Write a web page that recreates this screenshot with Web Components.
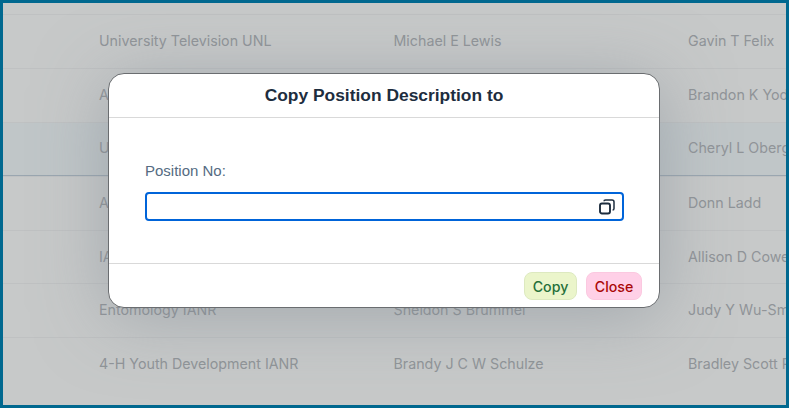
<!DOCTYPE html>
<html>
<head>
<meta charset="utf-8">
<style>
  html, body { margin: 0; height: 100%; }
  body { overflow: hidden; }
</style>
</head>
<body>
<app-frame>
  <data-row first><span>University Television UNL</span><span>Michael E Lewis</span><span>Gavin T Felix</span></data-row>
  <data-row><span>A</span><span></span><span>Brandon K Yoder</span></data-row>
  <data-row selected><span>U</span><span></span><span>Cheryl L Oberg</span></data-row>
  <data-row><span>A</span><span></span><span>Donn Ladd</span></data-row>
  <data-row><span>IA</span><span></span><span>Allison D Cowell</span></data-row>
  <data-row><span>Entomology IANR</span><span>Sheldon S Brummel</span><span>Judy Y Wu-Smart</span></data-row>
  <data-row><span>4-H Youth Development IANR</span><span>Brandy J C W Schulze</span><span>Bradley Scott Ross</span></data-row>
  <copy-dialog slot="dialog" heading="Copy Position Description to" label="Position No:"></copy-dialog>
</app-frame>

<script>
class AppFrame extends HTMLElement {
  constructor() {
    super();
    this.attachShadow({ mode: 'open' });
    this.shadowRoot.innerHTML = `
      <style>
        :host { display: block; box-sizing: border-box; width: 789px; height: 408px; border: 3px solid #00688f; position: relative; overflow: hidden; background: #c7c9c9; }
        #table { display: flex; flex-direction: column; padding-top: 11px; }
        #modal { position: absolute; left: 105px; top: 70px; }
      </style>
      <div id="table"><slot></slot></div>
      <div id="modal"><slot name="dialog"></slot></div>
    `;
  }
}

class DataRow extends HTMLElement {
  constructor() {
    super();
    this.attachShadow({ mode: 'open' });
    this.shadowRoot.innerHTML = `
      <style>
        :host { display: grid; grid-template-columns: 294.5px 294.5px 1fr; box-sizing: border-box; height: 53.9px; align-items: center; padding: 0 0 2px 96px; border-top: 1px solid #bfc1c2; font: 14.25px Inter, sans-serif; color: #909498; white-space: nowrap; overflow: hidden; }
        :host([selected]) { background: #c0c6c8; border-bottom: 1px solid #9aa6b0; }
      </style>
      <slot></slot>
    `;
  }
}

class PopupButton extends HTMLElement {
  constructor() {
    super();
    this.attachShadow({ mode: 'open' });
    this.shadowRoot.innerHTML = `
      <style>
        :host { display: inline-flex; align-items: center; justify-content: center; box-sizing: border-box; width: var(--w); height: 28px; border-radius: 8px; font: 500 14.2px Inter, sans-serif; border: 1px solid; }
        :host([kind=ok]) { --w: 53px; background: #ebf5cb; border-color: #dde9c0; color: #256f3a; }
        :host([kind=no]) { --w: 56px; background: #ffd0e7; border-color: #fbc9e0; color: #aa0808; }
      </style>
      <slot></slot>
    `;
  }
}

class CopyDialog extends HTMLElement {
  constructor() {
    super();
    this.attachShadow({ mode: 'open' });
    this.shadowRoot.innerHTML = `
      <style>
        :host { display: flex; flex-direction: column; box-sizing: border-box; width: 552px; height: 235px; background: #fff; border: 1px solid #6a6d70; border-radius: 16px; overflow: hidden; color: #1d2d3e; box-shadow: 0 8px 70px rgba(125,135,145,.5); }
        header { flex: none; display: flex; align-items: center; justify-content: center; border-bottom: 1px solid #d9d9d9; font: bold 17.4px "Liberation Sans", sans-serif; height: 43px; }
        main { flex: 1; padding: 44px 35px 0 36px; }
        label { display: block; font: 15px "Liberation Sans", sans-serif; color: #556b82; margin-bottom: 13px; }
        #field { box-sizing: border-box; height: 29px; border: 2px solid #0064d9; border-radius: 4px; display: flex; align-items: center; justify-content: flex-end; padding-right: 7px; }
        svg { display: block; }
        footer { height: 44px; flex: none; box-sizing: border-box; border-top: 1px solid #d9d9d9; display: flex; align-items: center; justify-content: flex-end; gap: 9px; padding: 1px 17px 0 0; }
      </style>
      <header></header>
      <main>
        <label></label>
        <div id="field">
          <svg width="16" height="16" viewBox="0 0 16 16" fill="none" stroke="#1d2d3e">
            <rect x="1" y="4.5" width="10" height="10" rx="2" stroke-width="1.9"/>
            <path d="M5 2.2 Q5 1 6.5 1 H13 Q15 1 15 3 V9.5 Q15 11 13.6 11" stroke-width="1.5"/>
          </svg>
        </div>
      </main>
      <footer>
        <popup-button kind="ok">Copy</popup-button>
        <popup-button kind="no">Close</popup-button>
      </footer>
    `;
  }
  connectedCallback() {
    this.shadowRoot.querySelector('header').textContent = this.getAttribute('heading');
    this.shadowRoot.querySelector('label').textContent = this.getAttribute('label');
  }
}

customElements.define('app-frame', AppFrame);
customElements.define('data-row', DataRow);
customElements.define('popup-button', PopupButton);
customElements.define('copy-dialog', CopyDialog);
</script>
</body>
</html>
